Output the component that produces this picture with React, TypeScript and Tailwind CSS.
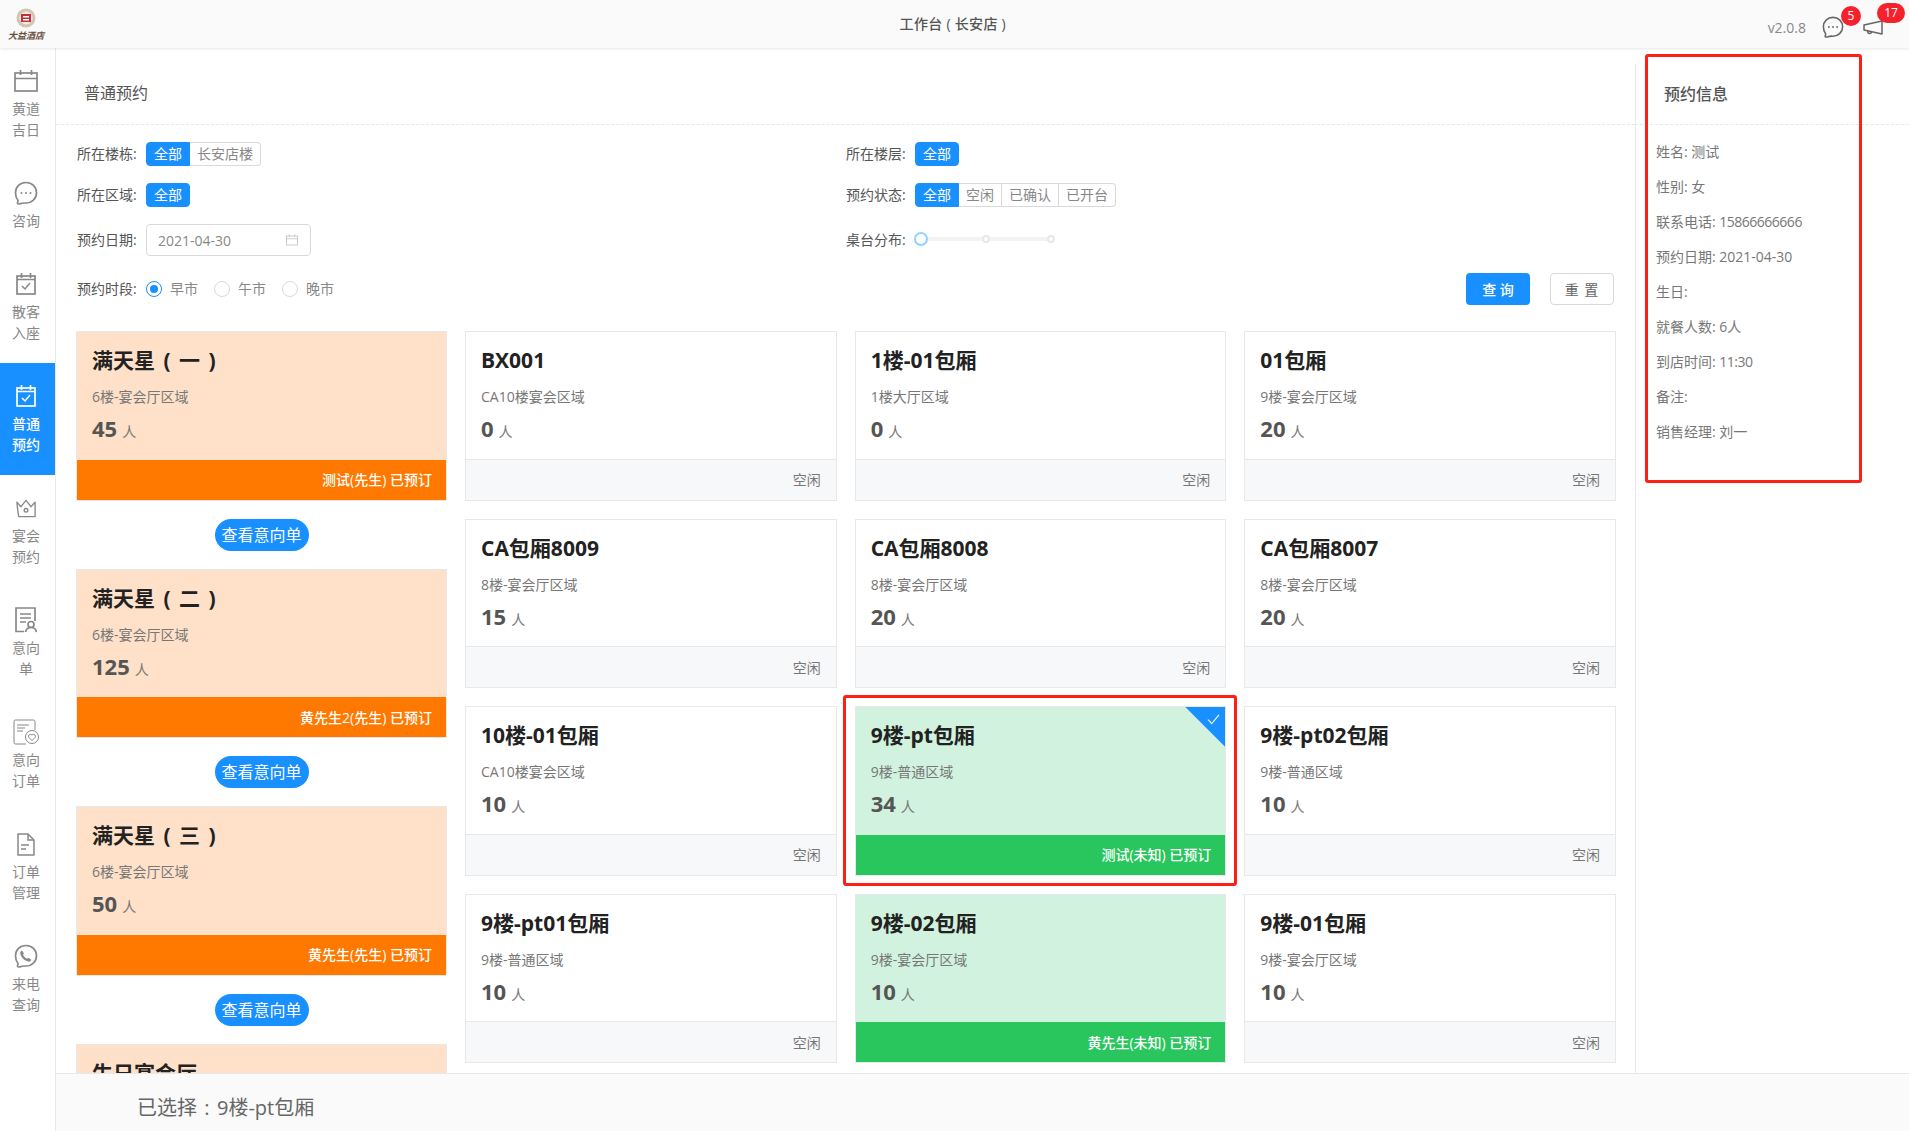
import React from "react";

type IconProps = { className?: string };

const CalendarIcon = ({ className }: IconProps) => (
  <svg viewBox="0 0 24 22" className={className} fill="none" stroke="currentColor" strokeWidth="1.7">
    <rect x="1" y="3" width="22" height="18" />
    <path d="M1 8.5h22M6.5 0v5M17.5 0v5" />
  </svg>
);
const CalCheckIcon = ({ className }: IconProps) => (
  <svg viewBox="0 0 20 22" className={className} fill="none" stroke="currentColor" strokeWidth="1.7">
    <rect x="1" y="3" width="18" height="18" />
    <path d="M1 6.5h18M5.5 0v5M14.5 0v5" />
    <path d="M6 13l3 3 5-6" strokeWidth="1.5" />
  </svg>
);
const ChatIcon = ({ className }: IconProps) => (
  <svg viewBox="0 0 24 24" className={className} fill="none" stroke="currentColor" strokeWidth="1.7">
    <path d="M12 1.5c6 0 10.5 4.5 10.5 10.2S18 22 12 22c-2 0-3.5-.2-5.5.6-1.400.5-2.600.4-3-.2-.3-.5.5-1.400.5-2.900C2.500 17.500 1.500 15 1.500 11.700 1.500 6 6 1.500 12 1.500z" />
    <circle cx="7.500" cy="12" r="1" fill="currentColor" stroke="none" />
    <circle cx="12" cy="12" r="1" fill="currentColor" stroke="none" />
    <circle cx="16.500" cy="12" r="1" fill="currentColor" stroke="none" />
  </svg>
);
const CrownIcon = ({ className }: IconProps) => (
  <svg viewBox="0 0 22 20" className={className} fill="none" stroke="currentColor" strokeWidth="1.500">
    <path d="M1 3l4.500 5L11 1l5.500 7L21 3v16H3C2 14 1.500 8 1 3z" strokeLinejoin="round" />
    <circle cx="11" cy="12" r="2" />
  </svg>
);
const DocUserIcon = ({ className }: IconProps) => (
  <svg viewBox="0 0 22 26" className={className} fill="none" stroke="currentColor" strokeWidth="1.700">
    <path d="M9 24.500H1V1h19v13" />
    <path d="M5 7h11M5 11h11M5 15h6" />
    <circle cx="16" cy="17.500" r="3" />
    <path d="M10.500 25c.5-3 2.500-4.500 5.500-4.500s5 1.500 5.500 4.500" />
  </svg>
);
const DocHeartIcon = ({ className }: IconProps) => (
  <svg viewBox="0 0 26 26" className={className} fill="none" stroke="currentColor" strokeWidth="1">
    <path d="M13 25H2.500A1.500 1.500 0 0 1 1 23.500v-21A1.500 1.500 0 0 1 2.500 1h18A1.500 1.500 0 0 1 22 2.500V11" />
    <path d="M4 6h12M4 9h8M4 12h6" />
    <circle cx="19" cy="18" r="6.500" />
    <path d="M19 21.500l-3-3a1.800 1.800 0 0 1 3-2.400 1.800 1.800 0 0 1 3 2.400z" />
  </svg>
);
const DocIcon = ({ className }: IconProps) => (
  <svg viewBox="0 0 18 23" className={className} fill="none" stroke="currentColor" strokeWidth="1.500">
    <path d="M11 1H1v21h16V7z" strokeLinejoin="round" />
    <path d="M11 1v6h6M4 12h8M4 16h5" />
  </svg>
);
const PhoneIcon = ({ className }: IconProps) => (
  <svg viewBox="0 0 24 24" className={className} fill="none" stroke="currentColor" strokeWidth="1.700">
    <path d="M12 1.500c6 0 10.500 4.500 10.500 10.200S18 22 12 22c-2 0-3.500-.2-5.500.6-1.400.5-2.600.4-3-.2-.3-.5.5-1.400.5-2.900C2.500 17.500 1.500 15 1.500 11.700 1.500 6 6 1.500 12 1.500z" />
    <path d="M8 6.500l2 3-1 1.300c.8 1.700 2.100 3 4 4l1.300-1 3 2c-.4 1.300-1.500 2-2.800 1.800-4-.7-7.500-4.200-8.200-8C6 8 6.800 7 8 6.500z" fill="currentColor" stroke="none" />
  </svg>
);
const MegaphoneIcon = ({ className }: IconProps) => (
  <svg viewBox="0 0 20 15" className={className} fill="none" stroke="currentColor" strokeWidth="1.500">
    <path d="M1 5l18-4v13L1 10z" strokeLinejoin="round" />
    <path d="M5 10.500c-.8 1.800.2 3 1.500 3s2-.8 2-2" />
  </svg>
);

const navItems: { lines: string[]; icon: React.ReactNode; active?: boolean; tall: boolean }[] = [
  { lines: ["黄道", "吉日"], icon: <CalendarIcon className="w-[24px] h-[22px]" />, tall: true },
  { lines: ["咨询"], icon: <ChatIcon className="w-[24px] h-[24px]" />, tall: false },
  { lines: ["散客", "入座"], icon: <CalCheckIcon className="w-[20px] h-[22px]" />, tall: true },
  { lines: ["普通", "预约"], icon: <CalCheckIcon className="w-[20px] h-[22px]" />, active: true, tall: true },
  { lines: ["宴会", "预约"], icon: <CrownIcon className="w-[20px] h-[19px]" />, tall: true },
  { lines: ["意向", "单"], icon: <DocUserIcon className="w-[22px] h-[26px]" />, tall: true },
  { lines: ["意向", "订单"], icon: <DocHeartIcon className="w-[26px] h-[26px]" />, tall: true },
  { lines: ["订单", "管理"], icon: <DocIcon className="w-[18px] h-[23px]" />, tall: true },
  { lines: ["来电", "查询"], icon: <PhoneIcon className="w-[24px] h-[24px]" />, tall: true },
];

const Seg = ({ items }: { items: string[] }) => (
  <div className="flex h-[24px] text-[14px] leading-[22px]">
    {items.map((t, i) =>
      i === 0 ? (
        <span
          key={t}
          className={`px-[7px] border border-[#1890ff] bg-[#1890ff] text-white ${items.length === 1 ? "rounded-[4px]" : "rounded-l-[4px]"}`}
        >
          {t}
        </span>
      ) : (
        <span
          key={t}
          className={`px-[7px] border-y border-r border-[#d9d9d9] text-[#888888] ${i === items.length - 1 ? "rounded-r-[4px]" : ""}`}
        >
          {t}
        </span>
      )
    )}
  </div>
);

const Label = ({ children }: { children: React.ReactNode }) => (
  <span className="w-[69px] text-[14px] leading-[20px] text-[#555555] whitespace-nowrap">{children}</span>
);

const Radio = ({ label, on }: { label: string; on?: boolean }) => (
  <div className="flex items-center gap-[8px] w-[68px]">
    <span
      className={`w-[16px] h-[16px] rounded-full border flex items-center justify-center ${on ? "border-[#1890ff]" : "border-[#d9d9d9]"}`}
    >
      {on && <span className="w-[8px] h-[8px] rounded-full bg-[#1890ff]" />}
    </span>
    <span className="text-[14px] leading-[20px] text-[#888888]">{label}</span>
  </div>
);

type CardData = { name: string; area: string; n: number; who?: string; kind?: "orange" | "green"; sel?: boolean };

const Card = ({ name, area, n, who, kind, sel }: CardData) => {
  const bg = kind === "orange" ? "bg-[#fee1c8]" : kind === "green" ? "bg-[#d1f2de]" : "bg-white";
  return (
    <div className={`relative h-[169.5px] shrink-0 border border-[#e8e8e8] flex flex-col ${bg}`}>
      <div className="flex-1 pl-[15px] pt-[14px]">
        <div className="text-[21px] leading-[28px] font-bold text-[#222222] whitespace-nowrap [word-spacing:3px]">{name}</div>
        <div className="mt-[13px] text-[14px] leading-[20px] text-[#777777] whitespace-nowrap">{area}</div>
        <div className="mt-[7px] leading-[28px] flex items-baseline gap-[5px]">
          <span className="text-[22px] font-bold text-[#555555]">{n}</span>
          <span className="text-[14px] text-[#777777]">人</span>
        </div>
      </div>
      {kind ? (
        <div
          className={`h-[40px] flex items-center justify-end pr-[14px] text-[14px] font-medium text-white ${kind === "orange" ? "bg-[#ff7800]" : "bg-[#28c65d]"}`}
        >
          {who} 已预订
        </div>
      ) : (
        <div className="h-[41px] border-t border-[#e8e8e8] bg-[#f7f8fa] flex items-center justify-end pr-[15px] text-[14px] text-[#777777]">
          空闲
        </div>
      )}
      {sel && (
        <div className="absolute top-0 right-0 w-[40px] h-[40px] bg-[#1890ff] [clip-path:polygon(0_0,100%_0,100%_100%)]">
          <svg viewBox="0 0 14 12" className="absolute top-[7px] right-[5px] w-[13px] h-[11px]" fill="none" stroke="#ffffff" strokeWidth="1.200">
            <path d="M1 6l4 4.500L13 1" />
          </svg>
        </div>
      )}
    </div>
  );
};

const leftCards: CardData[] = [
  { name: "满天星 ( 一 )", area: "6楼-宴会厅区域", n: 45, who: "测试(先生)", kind: "orange" },
  { name: "满天星 ( 二 )", area: "6楼-宴会厅区域", n: 125, who: "黄先生2(先生)", kind: "orange" },
  { name: "满天星 ( 三 )", area: "6楼-宴会厅区域", n: 50, who: "黄先生(先生)", kind: "orange" },
];

const gridCards: CardData[] = [
  { name: "BX001", area: "CA10楼宴会区域", n: 0 },
  { name: "1楼-01包厢", area: "1楼大厅区域", n: 0 },
  { name: "01包厢", area: "9楼-宴会厅区域", n: 20 },
  { name: "CA包厢8009", area: "8楼-宴会厅区域", n: 15 },
  { name: "CA包厢8008", area: "8楼-宴会厅区域", n: 20 },
  { name: "CA包厢8007", area: "8楼-宴会厅区域", n: 20 },
  { name: "10楼-01包厢", area: "CA10楼宴会区域", n: 10 },
  { name: "9楼-pt包厢", area: "9楼-普通区域", n: 34, who: "测试(未知)", kind: "green", sel: true },
  { name: "9楼-pt02包厢", area: "9楼-普通区域", n: 10 },
  { name: "9楼-pt01包厢", area: "9楼-普通区域", n: 10 },
  { name: "9楼-02包厢", area: "9楼-宴会厅区域", n: 10, who: "黄先生(未知)", kind: "green" },
  { name: "9楼-01包厢", area: "9楼-宴会厅区域", n: 10 },
];

const info: { label: string; value?: string; tight?: boolean }[] = [
  { label: "姓名:", value: "测试" },
  { label: "性别:", value: "女" },
  { label: "联系电话:", value: "15866666666", tight: true },
  { label: "预约日期:", value: "2021-04-30" },
  { label: "生日:" },
  { label: "就餐人数:", value: "6人" },
  { label: "到店时间:", value: "11:30", tight: true },
  { label: "备注:" },
  { label: "销售经理:", value: "刘一" },
];

export default function App() {
  return (
    <div className="relative w-[1909px] h-[1131px] overflow-hidden bg-white flex flex-col font-['Open_Sans','Noto_Sans_CJK_SC',sans-serif]">
      <header className="relative z-10 h-[48px] shrink-0 bg-[#fafafa] shadow-[0_1px_3px_rgba(0,0,0,0.1)] flex items-center">
        <div className="w-[52px] flex flex-col items-center">
          <svg viewBox="0 0 20 20" className="w-[20px] h-[20px] mt-[1px]">
            <circle cx="10" cy="10" r="9.500" fill="#d4c4b2" />
            <circle cx="10" cy="10" r="6.500" fill="#f3ebe2" />
            <rect x="5" y="6" width="10" height="8" fill="#c0303a" />
            <rect x="7" y="8" width="6" height="1.500" fill="#ffffff" />
            <rect x="7" y="11" width="6" height="1.500" fill="#ffffff" />
          </svg>
          <span className="mt-[2px] text-[9px] leading-[12px] font-bold italic text-[#6b5040] whitespace-nowrap">大益酒店</span>
        </div>
        <div className="flex-1 text-center text-[14px] font-medium text-[#555555] pl-[86px] pb-[2px] tracking-[0.3px]">工作台 ( 长安店 )</div>
        <div className="flex items-center pr-[26px] pt-[6px]">
          <span className="text-[14px] text-[#888888] mr-[16px]">v2.0.8</span>
          <div className="relative w-[22px] h-[22px] text-[#666666] mr-[19px]">
            <ChatIcon className="w-[22px] h-[22px]" />
            <span className="absolute -top-[10px] left-[19px] w-[20px] h-[20px] rounded-full bg-[#f5222d] text-white text-[12px] leading-[20px] text-center">5</span>
          </div>
          <div className="relative w-[20px] h-[15px] text-[#666666]">
            <MegaphoneIcon className="w-[20px] h-[15px]" />
            <span className="absolute -top-[17px] left-[14px] w-[28px] h-[20px] rounded-full bg-[#f5222d] text-white text-[12px] leading-[20px] text-center">17</span>
          </div>
        </div>
      </header>

      <div className="flex-1 flex min-h-0">
        <nav className="w-[56px] shrink-0 border-r border-[#e8e8e8] flex flex-col">
          {navItems.map((it) => (
            <div
              key={it.lines.join("") + (it.active ? "a" : "")}
              className={`${it.tall ? "h-[112px]" : "h-[91px]"} pr-[3px] pt-[21px] flex flex-col items-center ${it.active ? "bg-[#1890ff] text-white" : "text-[#888888]"}`}
            >
              <div className="h-[24px] flex items-center justify-center">{it.icon}</div>
              <div className={`mt-[5px] text-[14px] leading-[21px] text-center ${it.active ? "font-medium" : ""}`}>
                {it.lines.map((l) => (
                  <div key={l}>{l}</div>
                ))}
              </div>
            </div>
          ))}
        </nav>

        <div className="flex-1 min-w-0 flex flex-col">
          <div className="flex-1 min-h-0 flex">
            <main className="w-[1579px] shrink-0 flex flex-col min-h-0">
              <div className="h-[77px] shrink-0 border-b border-dashed border-[#e8e8e8] flex items-center pl-[28px] pt-[14px] text-[16px] text-[#555555]">
                普通预约
              </div>

              <div className="pl-[21px] pt-[17px] shrink-0 flex flex-col gap-[17px]">
                <div className="flex h-[24px]">
                  <div className="w-[769px] flex items-center">
                    <Label>所在楼栋:</Label>
                    <Seg items={["全部", "长安店楼"]} />
                  </div>
                  <div className="flex items-center">
                    <Label>所在楼层:</Label>
                    <Seg items={["全部"]} />
                  </div>
                </div>
                <div className="flex h-[24px]">
                  <div className="w-[769px] flex items-center">
                    <Label>所在区域:</Label>
                    <Seg items={["全部"]} />
                  </div>
                  <div className="flex items-center">
                    <Label>预约状态:</Label>
                    <Seg items={["全部", "空闲", "已确认", "已开台"]} />
                  </div>
                </div>
                <div className="flex h-[32px]">
                  <div className="w-[769px] flex items-center">
                    <Label>预约日期:</Label>
                    <div className="w-[165px] h-[32px] border border-[#d9d9d9] rounded-[4px] flex items-center justify-between pl-[11px] pr-[12px]">
                      <span className="text-[14px] text-[#888888]">2021-04-30</span>
                      <CalendarIcon className="w-[12px] h-[12px] text-[#c4c4c4]" />
                    </div>
                  </div>
                  <div className="flex items-center">
                    <Label>桌台分布:</Label>
                    <div className="relative w-[137px] h-[14px] -mt-[2px] -ml-[1px]">
                      <div className="absolute left-[6px] right-0 top-[5px] h-[4px] bg-[#f3f3f3]" />
                      <span className="absolute left-0 top-0 w-[14px] h-[14px] rounded-full bg-white border-2 border-[#91d5ff]" />
                      <span className="absolute left-[68px] top-[3px] w-[8px] h-[8px] rounded-full bg-white border-2 border-[#e8e8e8]" />
                      <span className="absolute left-[133px] top-[3px] w-[8px] h-[8px] rounded-full bg-white border-2 border-[#e8e8e8]" />
                    </div>
                  </div>
                </div>
                <div className="flex h-[32px] items-center">
                  <Label>预约时段:</Label>
                  <Radio label="早市" on />
                  <Radio label="午市" />
                  <Radio label="晚市" />
                  <div className="ml-auto flex gap-[20px] mr-[21px]">
                    <button className="w-[64px] h-[32px] rounded-[4px] bg-[#1890ff] text-white text-[14px] font-medium">查 询</button>
                    <button className="w-[64px] h-[32px] rounded-[4px] border border-[#d9d9d9] text-[#666666] text-[14px] tracking-[1px]">重 置</button>
                  </div>
                </div>
              </div>

              <div className="flex-1 min-h-0 overflow-hidden flex gap-[18px] pl-[20px] pt-[26px]">
                <div className="w-[371px] shrink-0 flex flex-col">
                  {leftCards.map((c) => (
                    <div key={c.name} className="flex flex-col shrink-0">
                      <Card {...c} />
                      <div className="h-[68px] flex items-center justify-center">
                        <button className="w-[94px] h-[32px] rounded-full bg-[#1890ff] text-white text-[16px] leading-[32px] whitespace-nowrap">查看意向单</button>
                      </div>
                    </div>
                  ))}
                  <div className="h-[169.5px] shrink-0 border border-[#e8e8e8] bg-[#fee1c8] pl-[15px] pt-[14px]">
                    <div className="text-[21px] leading-[28px] font-bold text-[#222222] whitespace-nowrap">生日宴会厅</div>
                  </div>
                </div>
                <div className="w-[1151px] shrink-0 grid grid-cols-3 gap-x-[18px] gap-y-[18px] content-start">
                  {gridCards.map((c) => (
                    <Card key={c.name} {...c} />
                  ))}
                </div>
              </div>
            </main>

            <aside className="flex-1 min-w-0 flex flex-col pt-[16px]">
              <div className="flex-1 flex flex-col">
                <div className="h-[61px] shrink-0 border-b border-dashed border-[#e8e8e8] relative">
                  <div className="absolute left-0 top-0 bottom-0 border-l border-[#e8e8e8]" />
                  <div className="pl-[29px] pt-[18px] text-[16px] font-medium leading-[24px] text-[#555555]">预约信息</div>
                </div>
                <div className="flex-1 border-l border-[#e8e8e8] pl-[20px] pt-[9px]">
                  {info.map((t) => (
                    <div key={t.label} className="h-[35px] text-[14px] leading-[35px] text-[#777777] whitespace-nowrap">
                      {t.label}
                      {t.value ? " " : ""}
                      {t.value && <span className={t.tight ? "tracking-[-0.5px]" : ""}>{t.value}</span>}
                    </div>
                  ))}
                </div>
              </div>
            </aside>
          </div>

          <footer className="h-[58px] shrink-0 border-t border-[#e8e8e8] bg-[#fafafa] flex items-center pl-[81px] pt-[10px] text-[20px] text-[#666666] whitespace-nowrap">
            已选择<span className="inline-block w-[20px] text-center">:</span>9楼-pt包厢
          </footer>
        </div>
      </div>

      <div className="absolute left-[1645px] top-[54px] w-[217px] h-[429px] border-[3px] border-[#ff1f14] rounded-[3px] pointer-events-none" />
      <div className="absolute left-[843px] top-[695px] w-[394px] h-[191px] border-[3px] border-[#ff1f14] rounded-[3px] pointer-events-none" />
    </div>
  );
}
